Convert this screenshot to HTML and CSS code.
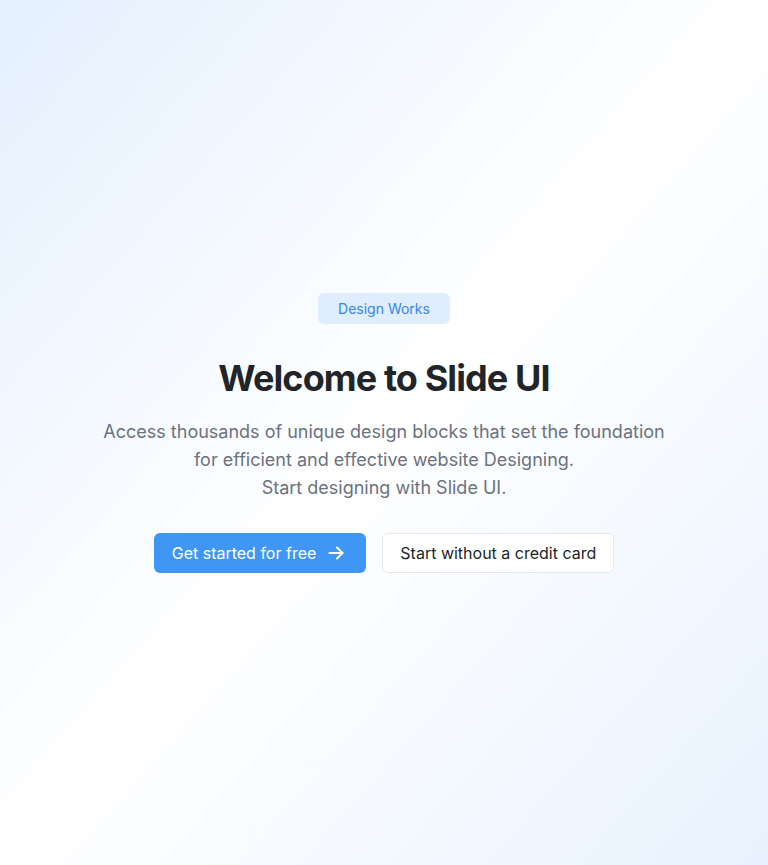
FILE: index.html
```html
<!DOCTYPE html>
<html lang="en">
<head>
<meta charset="utf-8">
<title>Slide UI</title>
<link rel="stylesheet" href="styles.css">
</head>
<body>
<section class="hero">
  <div class="hero-inner">
    <span class="badge">Design Works</span>
    <h1 class="title">Welcome to Slide UI</h1>
    <p class="lead">Access thousands of unique design blocks that set the foundation<br>for efficient and effective website Designing.<br>Start designing with Slide UI.</p>
    <div class="actions">
      <a class="btn btn-primary" href="#">Get started for free
        <svg class="arrow" width="20" height="20" viewBox="0 0 20 20" fill="none" stroke="currentColor" stroke-width="2" stroke-linecap="round" stroke-linejoin="round"><path d="M3.5 10h13"/><path d="M11 4.5 16.5 10 11 15.5"/></svg>
      </a>
      <a class="btn btn-secondary" href="#">Start without a credit card</a>
    </div>
  </div>
</section>
</body>
</html>
```
FILE: styles.css
```css
* { box-sizing: border-box; }
html, body { margin: 0; padding: 0; }
body {
  font-family: Inter, "Noto Sans", sans-serif;
  -webkit-font-smoothing: antialiased;
}
.hero {
  min-height: 865px;
  display: flex;
  align-items: center;
  justify-content: center;
  background: linear-gradient(to bottom right, #e4f0fe 0%, #ffffff 50%, #e8f2fe 100%);
}
.hero-inner {
  display: flex;
  flex-direction: column;
  align-items: center;
  text-align: center;
}
.badge {
  display: inline-block;
  background: #dfedfd;
  color: #3a86e8;
  font-size: 14px;
  line-height: 20px;
  padding: 6px 20px 5px;
  border-radius: 6px;
}
.title {
  margin: 34px 0 0;
  font-size: 36px;
  line-height: 40px;
  font-weight: 700;
  color: #212529;
  letter-spacing: -0.9px;
}
.lead {
  margin: 20px 0 0;
  font-size: 18px;
  line-height: 28px;
  color: #6b7280;
}
.actions {
  display: flex;
  gap: 16px;
  margin-top: 31px;
}
.btn {
  display: inline-flex;
  align-items: center;
  height: 40px;
  padding: 0 17px;
  border-radius: 6px;
  font-size: 16px;
  line-height: 24px;
  text-decoration: none;
}
.btn-primary {
  background: #4096f5;
  color: #fff;
  gap: 10px;
  padding: 0 20px 0 18px;
}
.arrow { display: block; }
.btn-secondary {
  background: #fff;
  color: #212529;
  border: 1px solid #e5e7eb;
}
```
